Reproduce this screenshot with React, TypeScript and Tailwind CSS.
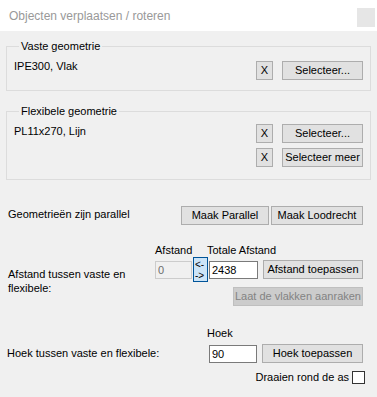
import React from "react";

function Btn({ children, className = "", disabled = false }: { children: React.ReactNode; className?: string; disabled?: boolean }) {
    return (
        <button
            className={
                "h-[19px] border text-[11px] leading-none flex items-center justify-center " +
                (disabled ? "border-[#bfbfbf] bg-[#cccccc] text-[#838383] " : "border-[#adadad] bg-[#e1e1e1] text-black ") +
                className
            }
        >
            {children}
        </button>
    );
}

function ClearBtn() {
    return <Btn className="w-[17px] font-light text-[#333333]">X</Btn>;
}

export default function App() {
    return (
        <div className="w-[377px] h-[397px] font-['Liberation_Sans',Arial,sans-serif] text-[11px] text-black">
            {/* title bar */}
            <div className="h-[31px] bg-white flex items-start justify-between">
                <span className="mt-[9px] ml-[9px] text-[12px] leading-[14px] text-[#999999]">Objecten verplaatsen / roteren</span>
                <div className="mt-[8px] mr-[2px] w-[18px] h-[19px] bg-[#e6e6e6]" />
            </div>

            <div className="h-[366px] bg-[#f0f0f0] px-[6px] pt-[9px] flex flex-col">
                {/* vaste geometrie */}
                <fieldset className="border border-[#dcdcdc] pb-[10px] pr-[7px] pl-[7px]">
                    <legend className="ml-[5px] px-[2px] leading-[12px]">Vaste geometrie</legend>
                    <div className="flex items-start mt-[8px]">
                        <span className="flex-1 leading-[13px]">IPE300, Vlak</span>
                        <div className="flex gap-[9px] mt-[1px]">
                            <ClearBtn />
                            <Btn className="w-[81px]">Selecteer...</Btn>
                        </div>
                    </div>
                </fieldset>

                {/* flexibele geometrie */}
                <fieldset className="mt-[14px] border border-[#dcdcdc] pb-[12px] pr-[7px] pl-[7px]">
                    <legend className="ml-[5px] px-[2px] leading-[12px]">Flexibele geometrie</legend>
                    <div className="flex items-start mt-[7px]">
                        <span className="flex-1 mt-[1px] leading-[13px]">PL11x270, Lijn</span>
                        <div className="flex flex-col gap-[5px]">
                            <div className="flex gap-[9px]">
                                <ClearBtn />
                                <Btn className="w-[81px]">Selecteer...</Btn>
                            </div>
                            <div className="flex gap-[9px]">
                                <ClearBtn />
                                <Btn className="w-[81px]">Selecteer meer</Btn>
                            </div>
                        </div>
                    </div>
                </fieldset>

                {/* parallel */}
                <div className="mt-[26px] flex items-center pl-[2px] pr-[8px]">
                    <span className="flex-1 leading-[13px] -mt-[3px]">Geometrieën zijn parallel</span>
                    <div className="flex gap-[2px]">
                        <Btn className="w-[88px]">Maak Parallel</Btn>
                        <Btn className="w-[92px]">Maak Loodrecht</Btn>
                    </div>
                </div>

                {/* afstand */}
                <div className="mt-[19px] flex pl-[2px] pr-[8px]">
                    <div className="w-[148px] mt-[23px] leading-[14px]">
                        Afstand tussen vaste en
                        <br />
                        flexibele:
                    </div>
                    <div className="flex-1 flex flex-col">
                        <div className="flex leading-[13px]">
                            <span className="w-[52px]">Afstand</span>
                            <span>Totale Afstand</span>
                        </div>
                        <div className="flex items-center">
                            <input
                                readOnly
                                disabled
                                value="0"
                                className="w-[37px] h-[18px] border border-[#cccccc] bg-[#f0f0f0] px-[2px] text-[11px] text-[#6d6d6d] outline-none"
                            />
                            <button className="ml-[1px] w-[15px] h-[25px] border border-[#005499] bg-[#cce4f7] text-[10px] leading-[11px] flex flex-col items-start justify-center pl-[1px] overflow-visible whitespace-nowrap">
                                <span>&lt;-</span>
                                <span>-&gt;</span>
                            </button>
                            <input
                                readOnly
                                value="2438"
                                className="ml-[1px] w-[49px] h-[18px] border border-[#7a7a7a] bg-white px-[2px] text-[11px] outline-none"
                            />
                            <Btn className="ml-[5px] w-[100px]">Afstand toepassen</Btn>
                        </div>
                        <div className="flex justify-end mt-[5px]">
                            <Btn disabled className="w-[130px]">Laat de vlakken aanraken</Btn>
                        </div>
                    </div>
                </div>

                {/* hoek */}
                <div className="mt-[21px] flex items-end pl-[1px] pr-[8px]">
                    <span className="flex-1 leading-[13px] mb-[3px]">Hoek tussen vaste en flexibele:</span>
                    <div className="flex flex-col">
                        <span className="leading-[13px] -ml-[2px]">Hoek</span>
                        <div className="flex items-center mt-[4px]">
                            <input
                                readOnly
                                value="90"
                                className="w-[48px] h-[18px] border border-[#7a7a7a] bg-white px-[2px] text-[11px] outline-none"
                            />
                            <Btn className="ml-[5px] w-[101px]">Hoek toepassen</Btn>
                        </div>
                    </div>
                </div>

                <div className="mt-[8px] flex items-center justify-end pr-[6px] gap-[3px]">
                    <span className="leading-[13px]">Draaien rond de as</span>
                    <span className="w-[13px] h-[13px] border border-[#333333] bg-white" />
                </div>
            </div>
        </div>
    );
}
